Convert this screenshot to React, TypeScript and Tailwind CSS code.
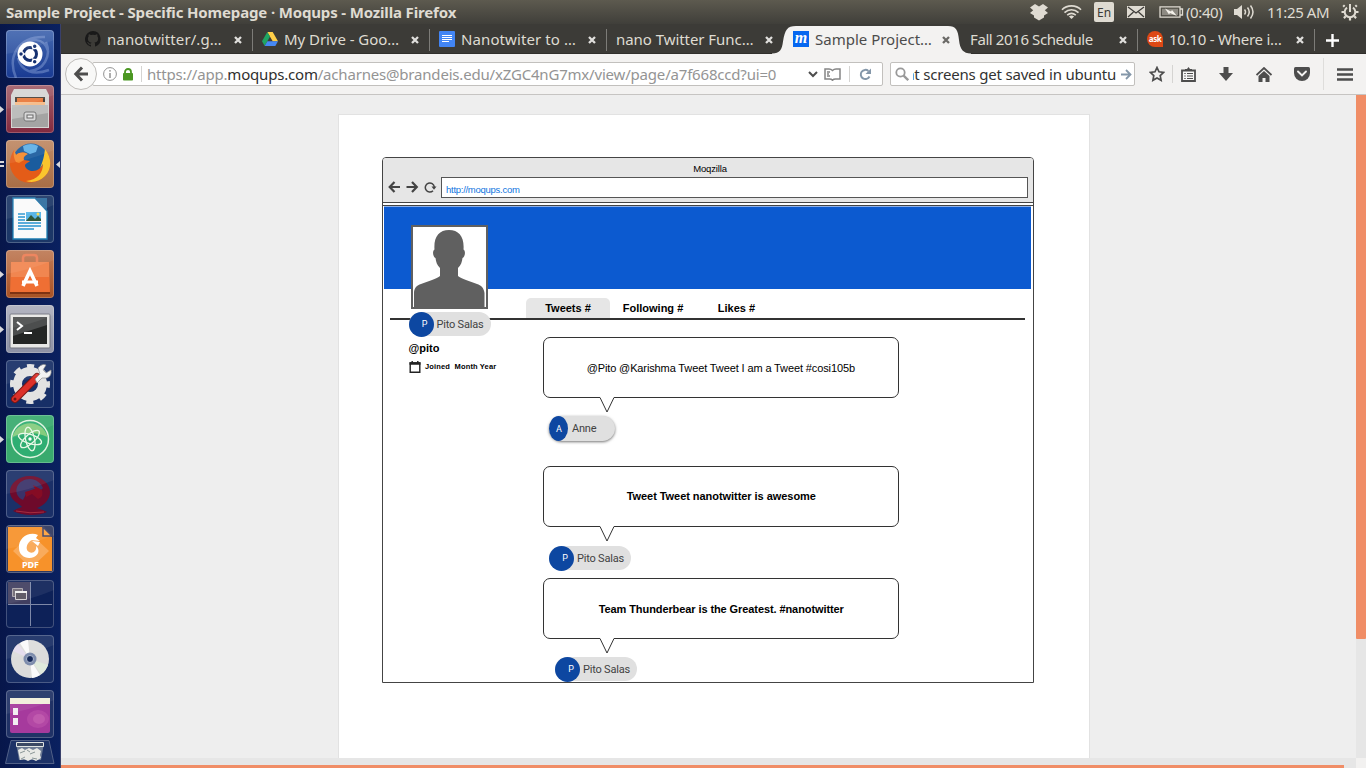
import type { ReactNode } from "react";

/* ---------- top panel ---------- */

function TopPanel() {
  return (
    <header className="flex h-6 shrink-0 items-center bg-linear-to-b from-[#5d5a4f] to-[#403f3a] pl-1.5 pr-[7px] text-[#dfdbd2]">
      <div className="whitespace-nowrap text-[15px] font-bold leading-6 tracking-[-0.15px]">
        Sample Project - Specific Homepage · Moqups - Mozilla Firefox
      </div>
      <div className="ml-auto flex items-center">
        <svg width="20" height="18" viewBox="0 0 20 18" fill="#dfdbd2">
          <path d="M6 1 10 3.6 14 1 19 4.4 15.8 7.2 19 10 15 12.6v1.8L10 17.4 5 14.4v-1.8L1 10 4.2 7.2 1 4.4Z" />
        </svg>
        <svg className="ml-3" width="21" height="16" viewBox="0 0 21 16" fill="none" stroke="#dfdbd2" strokeWidth="1.6">
          <path d="M1 5.8C6 .6 15 .6 20 5.8M3.5 8.6c4-3.8 10-3.8 14 0M6.2 11.2c2.6-2.3 6-2.3 8.6 0" />
          <path d="m10.5 15-2.6-2.6c1.6-1.3 3.6-1.3 5.2 0Z" fill="#dfdbd2" stroke="none" />
        </svg>
        <div className="ml-3 flex h-5 w-5 items-center justify-center rounded-[2px] bg-[#dfdbd2] pt-px text-[12px] leading-none text-[#3c3b37]">
          En
        </div>
        <svg className="ml-[13px]" width="18" height="12" viewBox="0 0 18 12">
          <path d="M0 0h18v12H0z" fill="#dfdbd2" />
          <path d="m1 1 8 6 8-6M1 11l5.500-5M17 11l-5.500-5" fill="none" stroke="#3c3b37" strokeWidth="1.2" />
        </svg>
        <svg className="ml-3.5" width="25" height="12" viewBox="0 0 25 12">
          <path d="M1 .8h20v10.400H1zM21 3h2.500v6H21" fill="none" stroke="#dfdbd2" strokeWidth="1.3" />
          <path d="M3 2.800h16v6.400H3z" fill="#8d8a82" />
          <path d="m6 2.500 6 3 1-1.500 5 6-7-3-1 1.500Z" fill="#f4f1ea" />
        </svg>
        <div className="ml-[2px] w-[38px] whitespace-nowrap text-[15px] leading-6 tracking-[-0.4px]">(0:40)</div>
        <svg className="ml-[10px]" width="22" height="16" viewBox="0 0 22 16">
          <path d="M0 5h3l5-4v14l-5-4H0z" fill="#dfdbd2" />
          <path d="M10.500 5.500q2 2.500 0 5M13.500 3.500q3.500 4.500 0 9M16.500 1.500q5 6.500 0 13" fill="none" stroke="#dfdbd2" strokeWidth="1.500" />
        </svg>
        <div className="ml-[11px] w-[62px] whitespace-nowrap text-[15px] leading-6 tracking-[-0.4px]">11:25 AM</div>
        <svg className="ml-3" width="18" height="18" viewBox="0 0 18 18" fill="none" stroke="#dfdbd2">
          <path d="M6 4.600a5.300 5.300 0 1 0 6 0" strokeWidth="2" />
          <path d="M9 1v8" strokeWidth="2" />
          <path d="M3.600 3.600 2.200 2.200M14.400 3.600l1.400-1.400M3 9H.5M15 9h2.500M4.700 13.300l-1.800 1.800M13.300 13.300l1.800 1.800M9 15v2.500" strokeWidth="2.200" />
        </svg>
      </div>
    </header>
  );
}

/* ---------- launcher ---------- */

function Tile({ tint, pips, children }: { tint: string; pips?: ReactNode; children: ReactNode }) {
  return (
    <div className="relative flex h-12 w-full shrink-0 pl-1.5">
      <div className={`h-12 w-12 overflow-hidden rounded-[4px] ${tint} shadow-[inset_0_0_0_1px_rgba(255,255,255,0.22)]`}>
        <svg width="48" height="48" viewBox="0 0 48 48">
          {children}
          <path d="M0 0h48v10Q24 20 0 24Z" fill="#fff" opacity=".07" />
        </svg>
      </div>
      {pips}
    </div>
  );
}

function Running() {
  return (
    <svg className="absolute left-0 top-[21px]" width="4" height="7" viewBox="0 0 4 7">
      <path d="M0 0 4 3.500 0 7Z" fill="#d8d8dc" />
    </svg>
  );
}

function FocusedPips() {
  return (
    <>
      <svg className="absolute left-0 top-[20px]" width="4" height="8" viewBox="0 0 4 8">
        <path d="M0 1h4v2H0zM0 5h4v2H0z" fill="#d8d8dc" />
      </svg>
      <svg className="absolute right-0 top-[21px]" width="4" height="7" viewBox="0 0 4 7">
        <path d="M4 0 0 3.500 4 7Z" fill="#d8d8dc" />
      </svg>
    </>
  );
}

function Launcher() {
  return (
    <nav className="flex w-[61px] shrink-0 flex-col gap-[7px] border-r border-[#39406b] bg-linear-to-r from-[#07164a] to-[#0a2160] pt-1.5">
      <Tile tint="bg-linear-to-b from-[#4468b0] to-[#193a92]">
        <g fill="none" stroke="#9db4e4" opacity=".4">
          <path d="M10 48C1 27 12 6 39 7M17 18c6-11 21-11 25 3M40 12c6 15-3 28-16 29M12 28c3 13 15 18 31 12" strokeWidth="2.500" />
        </g>
        <circle cx="24" cy="24" r="12.500" fill="#fff" />
        <circle cx="24" cy="24" r="6.500" fill="none" stroke="#15306f" strokeWidth="3" />
        <g stroke="#fff" strokeWidth="1.300">
          <path d="M19 24h-5M26.500 19.700l3-5.200M26.500 28.300l3 5.200" />
          <circle cx="15" cy="24" r="2.400" fill="#15306f" />
          <circle cx="28.700" cy="16.200" r="2.400" fill="#15306f" />
          <circle cx="28.700" cy="31.800" r="2.400" fill="#15306f" />
        </g>
      </Tile>
      <Tile tint="bg-linear-to-b from-[#a3616d] to-[#82293f]" pips={<Running />}>
        <path d="M8 4h32l3 6v33H5V10Z" fill="#d6d6d4" />
        <path d="M9 12h30v9H9z" fill="#4a4038" />
        <path d="M11 13h26v7H11z" fill="#e9783a" />
        <path d="M9 17h30v3H9z" fill="#f5bd8c" />
        <path d="M6 20h36v22H6z" fill="#a4a4a3" />
        <path d="M6 20h36v8L6 34z" fill="#bdbdbc" />
        <rect x="18" y="27" width="12" height="9" rx="2" fill="#d8d8d8" stroke="#777" />
        <rect x="21" y="30" width="6" height="3" fill="#eee" stroke="#666" />
      </Tile>
      <Tile tint="bg-linear-to-b from-[#c08a66] to-[#a86e46]" pips={<FocusedPips />}>
        <circle cx="25" cy="22" r="18.500" fill="#1a5c9e" />
        <path d="M17 6q8-4 15 0l-2 6-6 2-6-3Z" fill="#5fb0e6" />
        <path d="M39 9c7 9 7 20 0 27-9 9-24 9-31-1-6-8-5-17 0-25l2 5c4-3 7-3 11-1-3 2-4 3-3 6l6 1c-2 2-5 2-5 5 2 6 10 6 14 3 6-5 8-11 6-20Z" fill="#e45c18" />
        <path d="M39 9c7 9 7 20 0 27-6 6-13 7-19 5 12-1 17-9 17-17l-3 4c3-7 4-11 5-19Z" fill="#fbc52d" />
        <path d="M8 10l2 5c4-3 8-3 12-1-4 2-5 4-4 6l-5 3-3-1C8 19 7 14 8 10Z" fill="#f58a2c" />
      </Tile>
      <Tile tint="bg-[#1c3767]">
        <path d="M7 3h22l12 13v28H7Z" fill="#fafafa" stroke="#1d7db3" strokeWidth="1.300" />
        <path d="M29 3h12v13Z" fill="#2d6c9e" />
        <path d="M12 19h7M12 22h7M12 25h7M12 28h23M12 31h23M12 34h16" stroke="#2794cf" strokeWidth="1.500" />
        <path d="M20 17h15v9H20z" fill="#5ab6e8" />
        <path d="m20 26 5-6 4 4 3-3 3 3v2Z" fill="#31593a" />
        <circle cx="32" cy="19" r="1.500" fill="#f9dc57" />
      </Tile>
      <Tile tint="bg-linear-to-b from-[#bf7b56] to-[#a85223]" pips={<Running />}>
        <path d="M17 14V8q0-3 3-3h8q3 0 3 3v6" fill="none" stroke="#ec7d54" strokeWidth="2.500" />
        <path d="M5 12h38l1 31H4Z" fill="#ef6f34" />
        <path d="M5 12h38v15H5z" fill="#f18650" />
        <path d="m17 36 7-15 7 15" fill="none" stroke="#fff" strokeWidth="3.600" />
        <path d="M16 32h16" stroke="#fff" strokeWidth="3" />
        <path d="M4 43h40" stroke="#7e3212" strokeWidth="2" />
      </Tile>
      <Tile tint="bg-linear-to-b from-[#adb0bd] to-[#8d91a4]" pips={<Running />}>
        <rect x="4" y="9" width="40" height="34" rx="1" fill="#e8e8e6" stroke="#72757e" />
        <path d="M7 12h34v27H7z" fill="#242625" />
        <path d="M7 12h34v8L7 31z" fill="#4c4e4e" />
        <path d="m11 17 5 4-5 4M18 28h8" fill="none" stroke="#fff" strokeWidth="2" />
      </Tile>
      <Tile tint="bg-[#172f67]">
        <circle cx="24" cy="24" r="12.500" fill="none" stroke="#e2e2e2" strokeWidth="9" />
        <circle cx="24" cy="24" r="17.500" fill="none" stroke="#e2e2e2" strokeWidth="5" strokeDasharray="7 6.744" strokeDashoffset="3.500" />
        <path d="M9 39 31 17" stroke="#7d1713" strokeWidth="8" strokeLinecap="round" />
        <path d="M9 39 31 17" stroke="#dc3029" strokeWidth="6" strokeLinecap="round" />
        <path d="m29 19 5-5-2-6q4-5 8-3l-3 5 3 3 5-3q1 6-4 8l-5 0-5 5Z" fill="#f2f2f2" stroke="#8d8d8d" strokeWidth=".7" />
        <circle cx="9" cy="39" r="1.500" fill="#691714" />
      </Tile>
      <Tile tint="bg-[#39aa6e]" pips={<Running />}>
        <circle cx="24" cy="24" r="18.500" fill="#2fae72" stroke="#dff4df" strokeWidth="1.500" />
        <path d="M6.500 22a18 18 0 0 1 35 0Q24 14 6.500 22Z" fill="#a9d982" opacity=".7" />
        <g fill="none" stroke="#e8f8e6" strokeWidth="1.300">
          <ellipse cx="24" cy="24" rx="12" ry="4.500" transform="rotate(18 24 24)" />
          <ellipse cx="24" cy="24" rx="12" ry="4.500" transform="rotate(78 24 24)" />
          <ellipse cx="24" cy="24" rx="12" ry="4.500" transform="rotate(138 24 24)" />
        </g>
        <circle cx="24" cy="24" r="1.700" fill="#fff" />
      </Tile>
      <Tile tint="bg-[#1b3068]">
        <path d="M24 6C12 6 3 14 4 23c1 8 10 11 12 14-3 1-6 2-9 4 9 5 26 5 34 1-3-2-8-3-10-4 8-3 13-9 13-16C44 13 35 6 24 6Z" fill="#6e0a2b" />
        <path d="M11 17c2-5 7-8 13-8s11 4 13 9l-4 4-4-3-8 3-4 8c-5-2-8-7-6-13Z" fill="#3a3269" />
        <path d="m19 22 10-3-2-4 9 5q2 7-4 9l-6-5-6 3Z" fill="#850c24" />
        <path d="M10 41q14 3 28 1" fill="none" stroke="#a52d40" />
      </Tile>
      <Tile tint="bg-[#30395f]">
        <path d="M2 2h34l10 10v34H2Z" fill="#f7922a" />
        <path d="m25 9 18 17-18 17L7 26Z" fill="#f9ab5c" />
        <path d="M37 2v9h9Z" fill="#ffa13b" stroke="#3d4168" strokeWidth="1.500" />
        <path d="M32 10c-9-4-20 3-19 13 0 8 8 12 15 9 5-2 6-8 2-11 1 5-3 8-7 6-5-3-1-11 3-12l8 1-4-3Z" fill="#fff" />
        <path d="m26 16 6 5 2-4Z" fill="#fff" />
        <text x="24.500" y="42.500" textAnchor="middle" fill="#fff" fontSize="9" fontWeight="700">PDF</text>
      </Tile>
      <Tile tint="bg-[#0d2158]">
        <path d="M2 2h22v22.500H2z" fill="#5e5066" opacity=".65" />
        <path d="M24.500 2v44M2 24.500h44" stroke="#7d88a8" />
        <path d="M6.500 8.500h10v8h-10z" fill="#6e6873" stroke="#aaa5ac" />
        <path d="M9.500 11.500h11v8h-11z" fill="#55505d" stroke="#d2cfd3" />
        <path d="M9 11h12v2H9z" fill="#eee" />
      </Tile>
      <Tile tint="bg-[#182e65]">
        <circle cx="24" cy="24" r="19" fill="#dcdcdb" />
        <path d="M24 24 14 8q5-3 8-3ZM24 24l10 16q-5 3-8 3Z" fill="#fafafa" />
        <path d="M24 24 7 16q2-5 5-7Z" fill="#e5dced" />
        <path d="m24 24 18 6q-3 7-7 9Z" fill="#e0eadc" />
        <circle cx="24" cy="24" r="6.500" fill="#7d8cac" />
        <circle cx="24" cy="24" r="3.500" fill="#172a59" stroke="#c3cde0" strokeWidth=".8" />
      </Tile>
      <Tile tint="bg-[#203266]">
        <path d="M4 9h40v32q0 2-2 2H6q-2 0-2-2Z" fill="#a63a9d" />
        <ellipse cx="32" cy="29" rx="11" ry="9" fill="#cf69bb" opacity=".3" />
        <ellipse cx="33" cy="29" rx="6" ry="5" fill="#de86c4" opacity=".3" />
        <path d="M4 8h40v6H4z" fill="#f1eedb" />
        <path d="M7 18h5v7H7zM7 28h5v7H7z" fill="#f2edf1" />
      </Tile>
      <div className="-mt-[5px] pl-[5px]">
        <svg width="50" height="24" viewBox="0 0 50 24">
          <path d="M6 .5h38l5 23H.5Z" fill="#1d3267" stroke="#526188" />
          <path d="M11 3h28l-3 17H14Z" fill="#6d7b94" />
          <path d="M11.500 2.500h27v4h-27z" fill="#3a4864" stroke="#dfe3e2" />
          <path d="m13 10 4-2 3 2 4-2 4 2 4-2 4 3-1 4 1 3-5 3-4-2-4 2-4-2-4 1Z" fill="#e8e9e6" />
          <path d="m15 13 5-2M25 14l5-2M16 19l4-2M27 18l5 1M22 10l3 2" fill="none" stroke="#8b9798" />
        </svg>
      </div>
    </nav>
  );
}

/* ---------- browser chrome ---------- */

function CloseMark({ dark }: { dark?: boolean }) {
  return (
    <svg className="mt-px shrink-0" width="8" height="8" viewBox="0 0 8 8">
      <path d="m1 1 6 6M7 1 1 7" stroke={dark ? "#6b6a67" : "#e0dfdc"} strokeWidth="2.300" />
    </svg>
  );
}

function Tab({ icon, label, fit, active, sep }: { icon?: ReactNode; label: string; fit: string; active?: boolean; sep?: boolean }) {
  return (
    <div className={`relative flex w-[177px] shrink-0 items-center pl-[10px] pr-[10px] pt-px text-[15px] ${active ? "text-[#4c4c4c]" : "text-[#dfdbd2]"}`}>
      {active && (
        <svg className="absolute -left-[15px] top-[2px]" width="206" height="28" viewBox="0 0 206 28">
          <path d="M4 27.500c8 0 10-4 11-12C17 4 19 0 28 0h152c8 0 10 4 11 14 1 9 4 13.500 12 13.500V28H4Z" fill="#f3f2f1" />
        </svg>
      )}
      {icon && <span className="relative mr-[6px] flex h-4 w-4 shrink-0">{icon}</span>}
      <span className={`relative flex-1 whitespace-nowrap leading-5 ${fit}`}>{label}</span>
      <span className="relative"><CloseMark dark={active} /></span>
      {sep && <span className="absolute -right-px top-[5px] h-[22px] w-px bg-[#7d7c78]" />}
    </div>
  );
}

function TabStrip() {
  return (
    <div className="flex h-[30px] shrink-0 border-b border-[#302f2c] bg-[#3c3b37] pl-[14px]">
      <Tab
        sep
        label="nanotwitter/.g…"
        fit="tracking-[0.1px]"
        icon={
          <svg width="16" height="16" viewBox="0 0 16 16">
            <path d="M8 0a8 8 0 0 0-2.500 15.600c.4.100.5-.2.500-.4v-1.500c-2.200.5-2.700-1-2.700-1-.4-.9-.9-1.200-.9-1.200-.7-.5.1-.5.1-.5.8.1 1.200.8 1.200.8.7 1.200 1.900.9 2.300.7.100-.5.300-.9.500-1.100-1.800-.2-3.600-.9-3.600-4 0-.9.300-1.600.8-2.100-.1-.2-.4-1 .1-2.100 0 0 .7-.2 2.200.8a7.600 7.600 0 0 1 4 0c1.500-1 2.200-.8 2.200-.8.4 1.100.2 1.900.1 2.100.5.600.8 1.300.8 2.100 0 3.100-1.900 3.700-3.700 3.900.3.300.6.800.6 1.500v2.200c0 .2.100.5.500.4A8 8 0 0 0 8 0Z" fill="#191919" />
          </svg>
        }
      />
      <Tab
        sep
        label="My Drive - Goo…"
        fit="tracking-[-0.05px]"
        icon={
          <svg width="16" height="16" viewBox="0 0 16 16">
            <path d="M5.300 1h5.400L16 10.200h-5.300Z" fill="#ffcf48" />
            <path d="M5.300 1 8 5.600 2.700 15 0 10.300Z" fill="#1fa463" />
            <path d="M5.400 10.200H16L13.300 15H2.700Z" fill="#4688f4" />
          </svg>
        }
      />
      <Tab
        sep
        label="Nanotwiter to …"
        fit="tracking-[0.1px]"
        icon={
          <svg width="16" height="16" viewBox="0 0 16 16">
            <rect width="16" height="16" rx="1" fill="#4285f4" />
            <path d="M3 4.500h10M3 6.500h10M3 8.500h10M3 10.500h7" stroke="#fff" />
          </svg>
        }
      />
      <Tab label="nano Twitter Func…" fit="tracking-[-0.05px]" />
      <Tab
        active
        label="Sample Project…"
        fit="tracking-[0px]"
        icon={
          <span className="flex h-4 w-4 items-center justify-center bg-[#0667f0] pb-[3px] font-['Liberation_Serif',serif] text-[16px] font-bold italic leading-none text-white">
            m
          </span>
        }
      />
      <Tab sep label="Fall 2016 Schedule" fit="tracking-[-0.4px]" />
      <Tab
        sep
        label="10.10 - Where i…"
        fit="tracking-[-0.25px]"
        icon={
          <span className="flex h-4 w-4 items-center justify-center rounded-full rounded-br-[2px] bg-[#dd4814] text-[8px] font-bold tracking-[-0.5px] text-white">
            ask
          </span>
        }
      />
      <svg className="ml-[12px] mt-[10px]" width="13" height="13" viewBox="0 0 13 13">
        <path d="M6.500 0v13M0 6.500h13" stroke="#fff" strokeWidth="2.400" />
      </svg>
    </div>
  );
}

function Toolbar() {
  return (
    <div className="flex h-[41px] shrink-0 items-center border-b border-[#c6c4c2] bg-[#f3f2f1] pl-1 text-[15px]">
      <div className="relative z-10 flex h-8 w-8 shrink-0 items-center justify-center rounded-full border border-[#bfbdba] bg-[#f8f8f7]">
        <svg width="16" height="16" viewBox="0 0 16 16" fill="none" stroke="#4d4d4d" strokeWidth="3">
          <path d="M9 1.500 2.800 8 9 14.500M3 8h12" />
        </svg>
      </div>
      <div className="-ml-[5px] flex h-6 w-[791px] shrink-0 items-center rounded-[2px] border border-[#c2c0bd] bg-white">
        <svg className="ml-[10px] shrink-0" width="14" height="14" viewBox="0 0 14 14">
          <circle cx="7" cy="7" r="6.400" fill="none" stroke="#929292" />
          <path d="M7 6v5" stroke="#929292" strokeWidth="1.500" />
          <circle cx="7" cy="3.800" r=".9" fill="#929292" />
        </svg>
        <svg className="ml-[6px] shrink-0" width="10" height="13" viewBox="0 0 10 13">
          <path d="M2 6V4a3 3 0 0 1 6 0v2" fill="none" stroke="#4b9722" strokeWidth="1.800" />
          <rect y="5" width="10" height="7.500" rx=".8" fill="#4b9722" />
        </svg>
        <div className="ml-2 h-4 w-px bg-[#d5d4d2]" />
        <div className="ml-[5px] flex-1 whitespace-nowrap tracking-[-0.19px] text-[#949494]">
          https://app.<span className="text-[#2f2f2f]">moqups.com</span>/acharnes@brandeis.edu/xZGC4nG7mx/view/page/a7f668ccd?ui=0
        </div>
        <svg width="10" height="7" viewBox="0 0 10 7" fill="none" stroke="#4d4d4d" strokeWidth="2">
          <path d="m1 1 4 4 4-4" />
        </svg>
        <svg className="ml-[6px]" width="17" height="13" viewBox="0 0 17 13" fill="none" stroke="#858585" strokeWidth="1.500">
          <path d="M8.500 2.500Q7 1 5 1H1v10h4.500q2 0 3 1.200 1-1.200 3-1.200H16V1h-4Q10 1 8.500 2.500ZM3 4h3M3 6h2M3 8h3" />
        </svg>
        <div className="ml-2 h-4 w-px bg-[#d5d4d2]" />
        <svg className="ml-[9px] mr-[10px]" width="13" height="13" viewBox="0 0 13 13">
          <path d="M10.500 8.500A4.600 4.600 0 1 1 9.400 3" fill="none" stroke="#8497a9" strokeWidth="2" />
          <path d="M12 .5V6H6.500Z" fill="#8497a9" />
        </svg>
      </div>
      <div className="ml-[7px] flex h-6 w-[245px] shrink-0 items-center rounded-[2px] border border-[#c2c0bd] bg-white">
        <svg className="ml-1 shrink-0" width="14" height="14" viewBox="0 0 14 14" fill="none" stroke="#999">
          <circle cx="5.500" cy="5.500" r="4.200" strokeWidth="1.800" />
          <path d="m8.600 8.600 4.600 4.600" strokeWidth="2.300" />
        </svg>
        <div className="ml-1 flex w-[203px] justify-end overflow-hidden whitespace-nowrap tracking-[-0.2px] text-[#333]">
          <span>at screens get saved in ubuntu</span>
        </div>
        <svg className="ml-[5px]" width="11" height="11" viewBox="0 0 11 11" fill="none" stroke="#8497a9" strokeWidth="1.800">
          <path d="M0 5.500h9M5 1l4.500 4.500L5 10" />
        </svg>
      </div>
      <svg className="ml-[14px]" width="16" height="16" viewBox="0 0 16 16" fill="none" stroke="#4d4d4d" strokeWidth="1.700">
        <path d="m8 1.500 2 4.300 4.700.6-3.500 3.200.9 4.700L8 12l-4.100 2.300.9-4.700L1.300 6.400 6 5.800Z" />
      </svg>
      <div className="ml-[7px] h-[18px] w-px bg-[#d5d4d2]" />
      <svg className="ml-2" width="15" height="15" viewBox="0 0 15 15">
        <path d="M1 3.500h13v10.500H1z" fill="#f8f8f7" stroke="#4d4d4d" strokeWidth="1.800" />
        <path d="M4 4V2h2l1.500-2L9 2h2v2z" fill="#4d4d4d" />
        <path d="M3.300 6.500h1.400M6 6.500h6M3.300 9h1.400M6 9h6M3.300 11.500h1.400M6 11.500h6" stroke="#4d4d4d" strokeWidth="1.200" />
      </svg>
      <svg className="ml-[23px]" width="14" height="14" viewBox="0 0 14 14">
        <path d="M4.500 0h5v6H14l-7 8-7-8h4.500Z" fill="#4d4d4d" />
      </svg>
      <svg className="ml-[23px]" width="16" height="15" viewBox="0 0 16 15">
        <path d="M.5 8 8 1l7.500 7" fill="none" stroke="#4d4d4d" strokeWidth="1.800" />
        <path d="m8 4 5.500 5v6H9.500v-4h-3v4h-4V9Z" fill="#4d4d4d" />
      </svg>
      <svg className="ml-[22px]" width="16" height="14" viewBox="0 0 16 14">
        <path d="M1.500 0h13Q16 0 16 1.500V6a8 8 0 0 1-16 0V1.500Q0 0 1.500 0Z" fill="#4d4d4d" />
        <path d="m4 4.500 4 4 4-4" fill="none" stroke="#f3f2f1" strokeWidth="1.900" strokeLinecap="round" />
      </svg>
      <div className="ml-[13px] h-8 w-px bg-[#dedddb]" />
      <svg className="ml-[13px]" width="16" height="13" viewBox="0 0 16 13">
        <path d="M0 1.500h16M0 6.500h16M0 11.500h16" stroke="#4d4d4d" strokeWidth="2.600" />
      </svg>
    </div>
  );
}

/* ---------- page content ---------- */

function PersonChip() {
  return (
    <div className="flex h-6 w-[82px] items-center rounded-full bg-[#e0e0e0] font-['Roboto',sans-serif] text-[11px] text-[#424242]">
      <span className="flex h-[25px] w-[25px] shrink-0 items-center justify-center rounded-full bg-[#0d47a1] pl-[7px] pt-[2px] text-[9px] text-white">P</span>
      <span className="ml-[3px] whitespace-nowrap pt-[2px] tracking-[-0.2px]">Pito Salas</span>
    </div>
  );
}

function AnneChip() {
  return (
    <div className="flex h-[25px] w-[66px] items-center rounded-full bg-[#e0e0e0] font-['Roboto',sans-serif] text-[11px] text-[#424242] shadow-[0_1px_3px_rgba(0,0,0,0.55)]">
      <span className="flex h-[25px] w-[19px] shrink-0 items-center justify-center rounded-[50%] bg-[#0d47a1] pl-px pt-[2px] text-[9px] text-white">A</span>
      <span className="ml-1 pt-[2px] tracking-[-0.2px]">Anne</span>
    </div>
  );
}

function Bubble({ children, fit }: { children: ReactNode; fit: string }) {
  return (
    <div className={`relative flex h-[61px] w-[355.5px] items-center justify-center rounded-[7px] border border-[#333] text-[11px] text-black ${fit}`}>
      {children}
      <svg className="absolute left-[55px] top-[58px]" width="17" height="17" viewBox="0 0 17 17">
        <path d="M1 0h14v2.500H1Z" fill="#fff" />
        <path d="M0 1.500h1L8 16 15 1.500h1.500" fill="none" stroke="#333" />
      </svg>
    </div>
  );
}

function ProfileMock() {
  return (
    <div className="h-[526px] w-[652px] rounded-t-[4px] border border-[#444] bg-white font-['Liberation_Sans',Arial,sans-serif] text-black">
      <div className="flex h-[45px] flex-col rounded-t-[3px] border-b border-[#444] bg-[#e6e6e6]">
        <div className="pl-[4px] pt-[5px] text-center text-[9.500px] leading-[11px] tracking-[-0.15px]">Moqzilla</div>
        <div className="mt-[3px] flex items-center">
          <svg className="-mt-px ml-[5px]" width="13" height="12" viewBox="0 0 13 12" fill="none" stroke="#444" strokeWidth="2.200">
            <path d="M6.500 1 1.700 6l4.800 5M2 6h10" />
          </svg>
          <svg className="-mt-px ml-[5px]" width="13" height="12" viewBox="0 0 13 12" fill="none" stroke="#444" strokeWidth="2.200">
            <path d="m6 1 4.800 5L6 11M10.500 6H.5" />
          </svg>
          <svg className="-mt-px ml-[5px]" width="13" height="12" viewBox="0 0 13 12">
            <path d="M9 9.700A4.500 4.500 0 1 1 10.300 6" fill="none" stroke="#444" strokeWidth="1.500" />
            <path d="M7.500 5.500h5L10 8.800Z" fill="#444" />
          </svg>
          <div className="ml-[4px] h-[21px] w-[587px] border border-[#555] bg-white pl-1 pt-[5px] text-[9.500px] leading-[14px] tracking-[-0.27px] text-[#0f75e0]">
            http://moqups.com
          </div>
        </div>
      </div>
      <div className="mt-[2px] h-px bg-[#444]" />
      <div className="ml-px mr-[2px] h-[83px] border-t border-[#8fb0e6] bg-[#0c5ad0]" />
      <div className="ml-[7px] mr-[8.5px] flex h-[31px] items-end border-b-2 border-[#333] pl-[136px] text-[11px] font-bold">
        <div className="flex h-5 w-[84px] items-center justify-center rounded-t-[5px] bg-[#e6e6e6]">Tweets #</div>
        <div className="flex h-5 w-[86px] items-center justify-center">Following #</div>
        <div className="flex h-5 w-[81px] items-center justify-center">Likes #</div>
      </div>
      <div className="flex items-start">
        <div className="relative z-10 -mt-[95px] ml-[25.5px] w-[134.5px] shrink-0">
          <svg className="ml-[2.5px]" width="77" height="84" viewBox="0 0 77 84">
            <path d="M1 1h75v82H1z" fill="#fff" stroke="#606060" strokeWidth="2" />
            <path d="M3 83V68c0-5 3-8 7-9 7-3 16-5 19-8v-8c-3-3-4-6-4.500-10-2.500-1-3.500-7-1-8.500C22.500 12 28 5 38 5S53.500 12 52.500 24.500c2.500 1.500 1.500 7.500-1 8.500-.5 4-1.500 7-4.500 10v8c3 3 12 5 19 8 4 1 7 4 7.500 9v15Z" fill="#606060" />
          </svg>
          <div className="mt-[3px]"><PersonChip /></div>
          <div className="mt-[5px] text-[11px] font-bold leading-[14px]">@pito</div>
          <div className="mt-[5px] flex items-center">
            <svg width="12" height="12" viewBox="0 0 12 12">
              <path d="M1.200 2h9.600v9.300H1.200z" fill="none" stroke="#222" strokeWidth="1.400" />
              <path d="M.5 1.200h11v2.600H.5zM2.500 0h1.400v2H2.500zM8.100 0h1.400v2H8.100z" fill="#222" />
            </svg>
            <span className="ml-[4.5px] whitespace-nowrap pt-px text-[7.500px] font-bold leading-[12px] tracking-[0.15px]">Joined&nbsp; Month Year</span>
          </div>
        </div>
        <div className="flex flex-col pt-[17px]">
          <Bubble fit="pt-px tracking-[-0.12px]">@Pito @Karishma Tweet Tweet I am a Tweet #cosi105b</Bubble>
          <div className="ml-[6px] mt-[18px]"><AnneChip /></div>
          <div className="mt-[25px]"><Bubble fit="pb-px pl-px tracking-[-0.05px]"><b>Tweet Tweet nanotwitter is awesome</b></Bubble></div>
          <div className="ml-[6px] mt-[19px]"><PersonChip /></div>
          <div className="mt-[8px]"><Bubble fit="pt-px pl-px tracking-[-0.09px]"><b>Team Thunderbear is the Greatest. #nanotwitter</b></Bubble></div>
          <div className="ml-[12px] mt-[18px]"><PersonChip /></div>
        </div>
      </div>
    </div>
  );
}

function Viewport() {
  return (
    <div className="flex min-h-0 flex-1 flex-col">
      <div className="flex min-h-0 flex-1">
        <div className="min-w-0 flex-1 overflow-hidden bg-[#eee] pl-[277px] pt-[19px]">
          <div className="h-[660px] w-[752px] border border-[#e2e2e2] bg-white pl-[43px] pt-[42px]">
            <ProfileMock />
          </div>
        </div>
        <div className="w-[10px] bg-[#e6e6e6]">
          <div className="h-[544px] rounded-b-[1px] bg-[#f08d66]" />
        </div>
      </div>
      <div className="flex h-[10px] shrink-0 bg-[#e6e6e6]">
        <div className="mt-[7px] h-[3px] w-[1283px] bg-[#f08d66]" />
        <div className="ml-auto w-[10px] bg-[#f2f1f0]" />
      </div>
    </div>
  );
}

export default function App() {
  return (
    <div className="flex h-[768px] w-[1366px] flex-col overflow-hidden font-['Noto_Sans','Open_Sans',sans-serif]">
      <TopPanel />
      <div className="flex min-h-0 flex-1">
        <Launcher />
        <main className="flex min-w-0 flex-1 flex-col">
          <TabStrip />
          <Toolbar />
          <Viewport />
        </main>
      </div>
    </div>
  );
}
